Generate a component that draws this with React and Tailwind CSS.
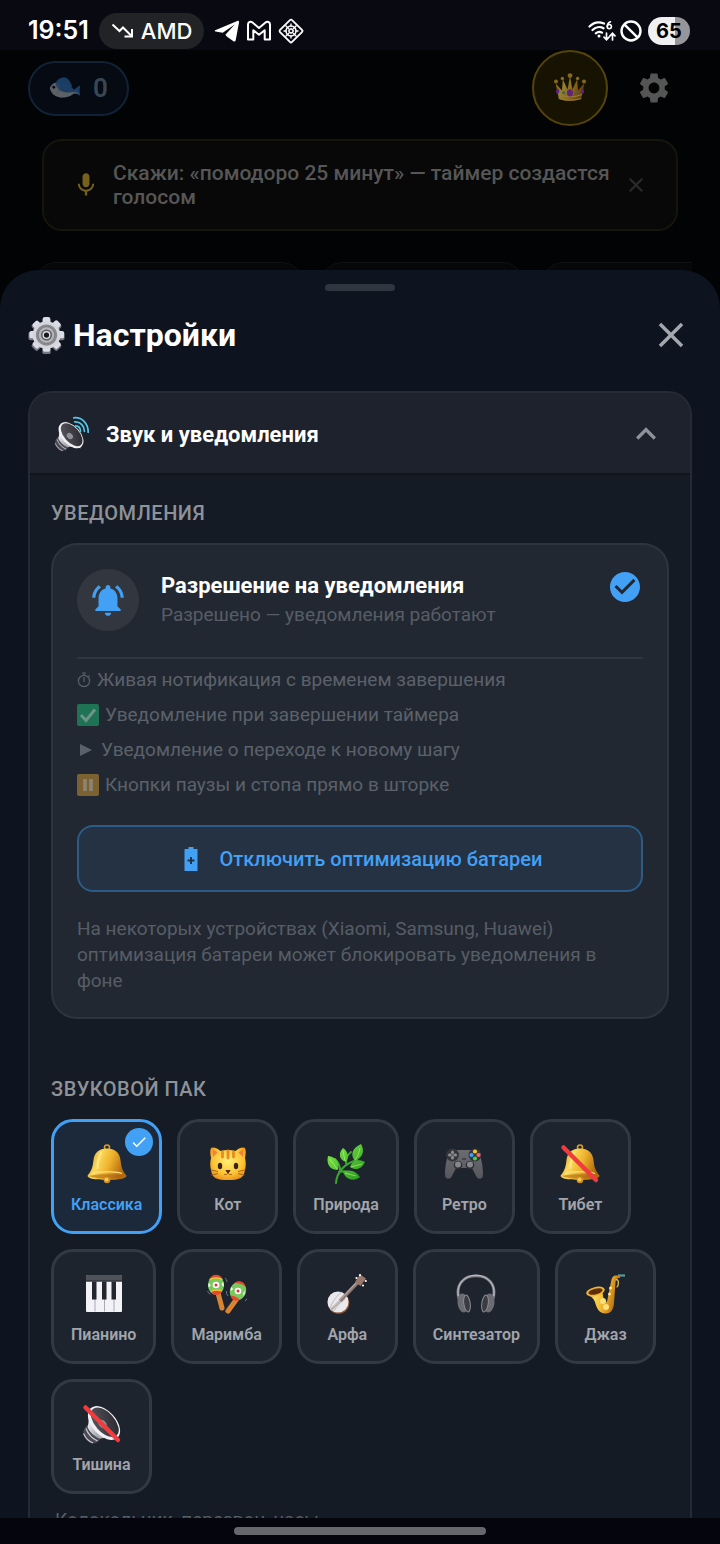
import { useState } from "react";
import {
  MdCheck,
  MdCheckCircle,
  MdClose,
  MdKeyboardArrowUp,
  MdMic,
  MdNotificationsActive,
  MdSettings,
} from "react-icons/md";

/* ---------- Status bar icons ---------- */

function TrendDownIcon() {
  return (
    <svg viewBox="0 0 24 16" className="w-6 h-4" fill="none" stroke="currentColor" strokeWidth="2">
      <path d="M1.5 1.5 8.5 8l3.5-3.5 9 9" />
      <path d="M13.5 13.5H21V6" />
    </svg>
  );
}

function TelegramIcon() {
  return (
    <svg viewBox="0 0 26 24" className="w-[26px] h-6" fill="currentColor">
      <path d="M1.2 11.2 23.3 1.9c1.1-.4 2 .3 1.7 1.6l-3.300 17.700c-.3 1.300-1.300 1.600-2.300 1L12.800 17.500l-1.400-1.800 9.300-10.100L8.700 13.700 1.500 12.500c-.9-.3-.9-.9-.3-1.300z" />
    </svg>
  );
}

function MailIcon() {
  return (
    <svg viewBox="0 0 26 22" className="w-[26px] h-[22px]" fill="none" stroke="currentColor" strokeWidth="2" strokeLinejoin="round">
      <path d="M2 4.500C2 2 4.700 1 6.500 2.500L13 8l6.500-5.500C21.300 1 24 2 24 4.500V19.500h-5.300V10.200L13 14.800l-5.700-4.600v9.300H2z" />
    </svg>
  );
}

function DiamondIcon() {
  return (
    <svg viewBox="0 0 26 26" className="w-[26px] h-[26px]" fill="none" stroke="currentColor">
      <rect x="4.500" y="4.500" width="17" height="17" rx="1.500" strokeWidth="1.800" transform="rotate(45 13 13)" />
      <circle cx="13" cy="13" r="5" strokeWidth="1.500" />
      <path d="M7.500 7.500 18.500 18.500M18.500 7.500 7.500 18.500M13 5.500v3M13 17.500v3M5.500 13h3M17.500 13h3" strokeWidth="1.300" />
      <path d="m13 10.500 2.500 2.500-2.500 2.500-2.500-2.500z" fill="#090912" strokeWidth="1.200" />
    </svg>
  );
}

function WifiIcon() {
  return (
    <svg viewBox="0 0 28 22" className="w-7 h-[22px]" fill="none" stroke="currentColor" strokeWidth="2.200" strokeLinecap="round">
      <path d="M1.500 6.500C5.500 2.500 11 1.500 16 3.500M4.500 10c3-3 7.500-3.700 11-1.700M7.800 13.300c2-1.700 4.300-1.900 6.200-.6" />
      <circle cx="11" cy="16" r="1.500" fill="currentColor" stroke="none" />
      <path d="M22.500 1.800c-2 .7-3.200 2.400-3.200 4.700" strokeWidth="1.600" />
      <circle cx="21.300" cy="6.600" r="2.100" strokeWidth="1.600" />
      <path d="M18.500 13v6.500m-2.500-2.300 2.500 2.500 2.500-2.500M24.500 20v-6.500M22 15.800l2.500-2.500 2.500 2.500" strokeWidth="1.700" />
    </svg>
  );
}

function BlockedIcon() {
  return (
    <svg viewBox="0 0 22 22" className="w-[22px] h-[22px]" fill="none" stroke="currentColor" strokeWidth="2.400">
      <circle cx="11" cy="11" r="9.500" />
      <path d="m4.300 4.300 13.400 13.400" />
    </svg>
  );
}

function BatteryPlusIcon() {
  return (
    <svg viewBox="0 0 26 26" className="w-[26px] h-[26px]" fill="currentColor">
      <path fillRule="evenodd" d="M10.500 1h5v2H19q.5 0 .5.500v21q0 .5-.5.500H7q-.5 0-.5-.500v-21q0-.5.5-.500h3.500zM12 11v2.500H9.500v2H12V18h2v-2.500h2.500v-2H14V11z" />
    </svg>
  );
}

/* ---------- Colour pictograms, all on a 40x40 grid ---------- */

function Gradients() {
  return (
    <svg className="absolute w-0 h-0" aria-hidden="true">
      <defs>
        <linearGradient id="gold" x1="0" x2="1" y1="0" y2="0.3">
          <stop offset="0" stopColor="#c98516" />
          <stop offset="0.35" stopColor="#fbd95a" />
          <stop offset="0.65" stopColor="#eeb12c" />
          <stop offset="1" stopColor="#b46b10" />
        </linearGradient>
        <linearGradient id="leaf" x1="0" x2="1" y1="0" y2="1">
          <stop offset="0" stopColor="#8af04c" />
          <stop offset="1" stopColor="#22941d" />
        </linearGradient>
        <radialGradient id="cat" cx="0.5" cy="0.4" r="0.65">
          <stop offset="0" stopColor="#fff07a" />
          <stop offset="0.65" stopColor="#fcc432" />
          <stop offset="1" stopColor="#e88d1c" />
        </radialGradient>
        <linearGradient id="steel" x1="0" x2="1" y1="0.3" y2="0.8">
          <stop offset="0" stopColor="#f4f4f8" />
          <stop offset="0.5" stopColor="#a5a5ae" />
          <stop offset="1" stopColor="#dcdce2" />
        </linearGradient>
        <linearGradient id="pad" x1="0" x2="0" y1="0" y2="1">
          <stop offset="0" stopColor="#6b6c72" />
          <stop offset="1" stopColor="#57565d" />
        </linearGradient>
        <linearGradient id="cone" x1="0" x2="1" y1="1" y2="0">
          <stop offset="0" stopColor="#5a5a60" />
          <stop offset="1" stopColor="#25252b" />
        </linearGradient>
      </defs>
    </svg>
  );
}

function BellShape() {
  return (
    <g>
      <circle cx="20" cy="3.500" r="2.500" fill="none" stroke="#d99a22" strokeWidth="1.600" />
      <path d="M20 4.500c8 0 12.500 4 13.500 11.500.7 6 1.500 10.500 5.500 15 1.500 2-1 3-4 3.700-7 1.600-23 1.600-30 0-3-.7-5.500-1.700-4-3.700 4-4.500 4.800-9 5.500-15C7.500 8.500 12 4.500 20 4.500z" fill="url(#gold)" />
      <path d="M2 32c8-2.500 28-2.500 36 0-7 3.500-29 3.500-36 0z" fill="#a65f12" opacity="0.55" />
      <path d="M5 29.500c8-2.600 22-2.600 30 0" fill="none" stroke="#fbe07a" strokeWidth="1.200" />
      <path d="M14 9c-2.500 4-3 9-3.500 15" fill="none" stroke="#fff1a8" strokeWidth="2.200" opacity="0.6" strokeLinecap="round" />
      <circle cx="20" cy="36" r="3.300" fill="#d08d21" />
      <circle cx="19.500" cy="35.500" r="2" fill="#f6c94e" />
    </g>
  );
}

function Slash() {
  return <path d="M3.500 3.500 36 36" stroke="#f03b3f" strokeWidth="4.500" strokeLinecap="round" />;
}

function SpeakerShape() {
  return (
    <g>
      <path d="M1.500 27c1-3.500 3-5.500 5.500-6.500L19.500 33c-1.500 3.500-4.500 6-8 6.500C5.500 39 1 32.500 1.500 27z" fill="#4c4a54" />
      <path d="M1.500 29.500c2 4.500 5 8 9.500 9.500M4 24.500c2 5.500 6 10 11.500 12.500" stroke="#c9c8d2" strokeWidth="1.200" fill="none" />
      <path d="M6 8c1 6 1 11-.5 15 2 5 7 9.500 12 11.500 6-1.500 12 0 17.500 1.500z" fill="url(#steel)" />
      <ellipse cx="22" cy="19" rx="20" ry="12" transform="rotate(48 22 19)" fill="#f0f0f5" />
      <ellipse cx="22.800" cy="18.300" rx="17.800" ry="9.800" transform="rotate(48 22.800 18.300)" fill="url(#cone)" />
      <ellipse cx="20.500" cy="20" rx="4.500" ry="3.500" transform="rotate(48 20.500 20)" fill="#908e96" />
    </g>
  );
}

const ART = {
  bell: <BellShape />,
  cat: (
    <g>
      <path d="M3 4c2.500-1.500 7 .5 9.500 3 5-1.200 10-1.200 15 0 2.500-2.500 7-4.500 9.500-3 1.500 3 .5 7 0 10 1 4 1 8 0 12-1.200 8.500-6 10-17 10S4.200 34.500 3 26c-1-4-1-8 0-12-.5-3-1.500-7 0-10z" fill="url(#cat)" />
      <path d="M4.500 6c2 0 3.500 1 5 2.500L5 13zM35.500 6c-2 0-3.500 1-5 2.500l4.500 4.500z" fill="#f0833c" />
      <path d="M14.500 8v5M20 7v7M25.500 8v5" stroke="#e98a22" strokeWidth="2.800" strokeLinecap="round" />
      <ellipse cx="12" cy="22" rx="2.200" ry="3.200" fill="#3a2411" />
      <ellipse cx="28" cy="22" rx="2.200" ry="3.200" fill="#3a2411" />
      <path d="M18 26.500h4l-2 2.700z" fill="#5a2a14" stroke="#5a2a14" strokeLinejoin="round" />
      <path d="M20 29c-1 2-3 2-4 1.200M20 29c1 2 3 2 4 1.200M3 26l7 1.500M3.500 31l6.500-1.500M37 26l-7 1.500M36.500 31 30 29.500" fill="none" stroke="#a8651c" strokeWidth="1" />
    </g>
  ),
  herb: (
    <g>
      <path d="M10 39c1-11 8-19 21-23M13 28c5-1 9-2 15 5M14 26c0-5-2-8-5-11M20 19c0-4 1-8 5-11" fill="none" stroke="#3aa82b" strokeWidth="2" strokeLinecap="round" />
      <path d="M35 0c4 7 2 13-6 17-5-6-3-13 6-17zM39 18c-3 7-9 9-15 5 2-6 8-9 15-5zM17 4c5 3 6 9 3 14-7-2-8-9-3-14zM2 12c8 1 12 6 10 14C4 26 0 20 2 12zM17 28c7-3 13-1 17 5-6 5-14 3-17-5z" fill="url(#leaf)" />
      <path d="M34 4c-1 5-2 8-5 12M36 20c-4 1-7 2-11 3M17 7l2 10M4 15l7 10M19 29l11 3" fill="none" stroke="#c6ff8c" strokeWidth="0.800" opacity="0.7" />
    </g>
  ),
  gamepad: (
    <g>
      <path d="M8 6h24c5 3 7 16 7 24 0 6-5 6-7 2l-4-8H12l-4 8c-2 4-7 4-7-2C1 22 3 9 8 6z" fill="url(#pad)" />
      <circle cx="8.500" cy="11" r="6.500" fill="#35353b" />
      <circle cx="31" cy="11" r="6.500" fill="#35353b" />
      <path d="M8.500 8v6M5.500 11h6" stroke="#8b8b92" strokeWidth="3" strokeLinecap="round" />
      <path d="m5.500 8 6 6M11.500 8l-6 6" stroke="#35353b" strokeWidth="0.800" />
      <circle cx="31" cy="7.500" r="2.100" fill="#f7c52d" />
      <circle cx="31" cy="14.500" r="2.100" fill="#4ccb55" />
      <circle cx="27.500" cy="11" r="2.100" fill="#3aa4f4" />
      <circle cx="34.500" cy="11" r="2.100" fill="#f06a6e" />
      <circle cx="14" cy="21" r="4.300" fill="#302f35" />
      <circle cx="26" cy="21" r="4.300" fill="#302f35" />
      <circle cx="14" cy="20.500" r="3" fill="#86868d" />
      <circle cx="26" cy="20.500" r="3" fill="#86868d" />
      <path d="M18 15h4" stroke="#303036" strokeWidth="1.200" />
    </g>
  ),
  mutedBell: (
    <g>
      <BellShape />
      <Slash />
    </g>
  ),
  piano: (
    <g>
      <rect x="2" y="1" width="36" height="37" rx="1" fill="#f3f2f7" />
      <rect x="2" y="1" width="36" height="6.500" rx="1" fill="#50525a" />
      <path d="M2 7h36" stroke="#25262c" strokeWidth="1.200" />
      <path d="M11 8v29.500M20.500 8v29.500M30 8v29.500" stroke="#aaa8b6" strokeWidth="1" />
      <path d="M8 7.500h4.500v18H8zM18 7.500h4.500v18H18zM27.500 7.500H32v18h-4.500z" fill="#25262d" />
    </g>
  ),
  maracas: (
    <g>
      <path d="m11 19 4 15" stroke="#d98432" strokeWidth="5" strokeLinecap="round" />
      <path d="m29 26-8 11" stroke="#d98432" strokeWidth="5" strokeLinecap="round" />
      <ellipse cx="9" cy="11" rx="8" ry="10" fill="#7bc85e" />
      <path d="M3 5C5-.5 13-.5 15 4.500c-4-1.500-8-1.500-12 .5zM4 17.500c3-1.500 8-1.500 11-.5-1.500 5-9 5.500-11 .5z" fill="#e8472c" />
      <path d="M2.500 5.500c4-2 9-2 13 0M4 17.500c3-1.500 8-1.500 11-.5" fill="none" stroke="#f7c438" strokeWidth="1.200" />
      <circle cx="9" cy="11" r="3.300" fill="#fff" />
      <circle cx="9" cy="11" r="1.500" fill="#e0353d" />
      <path d="M1.500 9q4 2 0 4.500zM16.500 8q-3.500 2 .3 5z" fill="#fff" />
      <ellipse cx="31" cy="17" rx="8" ry="9.500" transform="rotate(20 31 17)" fill="#7bc85e" />
      <path d="M27.500 9c4-3.500 10-1.500 11 4-3-3-6.500-4-11-4zM24 21.500c3.500.3 7 2 9 4.500-3 2-9.500 0-9-4.500z" fill="#e8472c" />
      <circle cx="31" cy="17" r="3.300" fill="#fff" />
      <circle cx="31" cy="17" r="1.500" fill="#e0353d" />
      <path d="M24 13q4 2-.5 4zM38 17q-3 2-1 5z" fill="#fff" />
      <path d="M.5 17q1 2.500 3 3.500M18 4q2 1.500 2 4M38 27q2.500-2 3-4M19.500 17q-.5 3 1.500 5" fill="none" stroke="#6d7480" strokeWidth="1" />
    </g>
  ),
  banjo: (
    <g>
      <circle cx="11.500" cy="29" r="10.800" fill="#8e5535" />
      <circle cx="11" cy="28" r="10.500" fill="#e9e9ed" />
      <path d="M3 34c3-7 7-13 12-16M7 37c2-4 7-9 11-12" stroke="#bcbcc4" strokeWidth="1" fill="none" />
      <path d="m13 27 20-21" stroke="#8f7a72" strokeWidth="3.500" />
      <path d="m4 36 9-9" stroke="#b9b4b4" strokeWidth="2.500" />
      <path d="m7 32 26-27" stroke="#d3c9c4" strokeWidth="0.800" />
      <path d="m28 8 5-7.500 6 4L33.500 12z" fill="#9a776b" />
      <circle cx="29.500" cy="4" r="1.100" fill="#fff" />
      <circle cx="33" cy="1.200" r="1.100" fill="#fff" />
      <circle cx="38.800" cy="7" r="1.100" fill="#fff" />
      <circle cx="36" cy="11.500" r="1.100" fill="#fff" />
    </g>
  ),
  headphones: (
    <g>
      <path d="M3 25C-1 10 8 1.800 20 1.800S41 10 37 25" fill="none" stroke="#85868d" strokeWidth="2.800" />
      <path d="M2.300 22C0 10 9 1.200 20 1.200s20 9 17.700 21" fill="none" stroke="#d6d6dc" strokeWidth="0.800" />
      <ellipse cx="7" cy="29" rx="5.500" ry="9.500" transform="rotate(-8 7 29)" fill="#6b6b74" />
      <ellipse cx="33" cy="29" rx="5.500" ry="9.500" transform="rotate(8 33 29)" fill="#6b6b74" />
      <ellipse cx="11" cy="29.500" rx="3.200" ry="8.500" transform="rotate(-8 11 29.500)" fill="#3b3b42" stroke="#8d8d95" strokeWidth="1" />
      <ellipse cx="29" cy="29.500" rx="3.200" ry="8.500" transform="rotate(8 29 29.500)" fill="#3b3b42" stroke="#8d8d95" strokeWidth="1" />
    </g>
  ),
  sax: (
    <g>
      <path d="M39 1.500h-7" stroke="#5d9a9a" strokeWidth="2.200" />
      <path d="M34 1.500h-3.500c-3.500 0-4.500 2-5.200 5l-3.800 19c-.6 3.500-3 4-3.800 0L16 16 2 20c3 3 5.500 4 7 8 1.500 6 4 11.500 10.500 11.500 6 0 8-4.500 8.500-10.500l1.500-20c.2-3 .8-5 4.500-5z" fill="url(#gold)" />
      <ellipse cx="9.500" cy="17.500" rx="9.500" ry="4.500" transform="rotate(-14 9.500 17.500)" fill="#f4b62c" />
      <ellipse cx="9.500" cy="17.500" rx="7.300" ry="2.900" transform="rotate(-14 9.500 17.500)" fill="#5e2e0c" />
      <path d="M30 6c3.500-2 2.500 7 .5 7" fill="none" stroke="#e9c45b" strokeWidth="1.300" />
      <circle cx="24.500" cy="14" r="1.500" fill="#ffe68a" />
      <circle cx="23.500" cy="20" r="1.500" fill="#ffe68a" />
      <circle cx="17" cy="27" r="3" fill="#ffe07a" />
      <circle cx="20" cy="33" r="3" fill="#ffe07a" />
    </g>
  ),
  mutedSpeaker: (
    <g>
      <SpeakerShape />
      <Slash />
    </g>
  ),
  speaker: (
    <g>
      <g transform="translate(0 5) scale(0.86)">
        <SpeakerShape />
      </g>
      <path d="M22 2c9-1 16 6 16 16M23 6.500c6.500-.5 10.500 4.500 10.800 10.500M24 11c3.300 0 5.300 2.500 5.500 6" fill="none" stroke="#53c9e8" strokeWidth="1.900" strokeLinecap="round" />
    </g>
  ),
  gear: (
    <g>
      {[0, 45, 90, 135].map((angle) => (
        <rect key={angle} x="15.500" y="1" width="9" height="39" rx="2" fill="#77777f" transform={`rotate(${angle} 20 20.500)`} />
      ))}
      {[0, 45, 90, 135].map((angle) => (
        <rect key={angle} x="16" y="0" width="8" height="37.500" rx="2" fill="#dcdce6" transform={`rotate(${angle} 20 19)`} />
      ))}
      <circle cx="20" cy="19.500" r="15" fill="#d5d5de" />
      <circle cx="20" cy="19.500" r="11.500" fill="#8b8b92" />
      <circle cx="20" cy="19.500" r="9" fill="#b3b3ba" stroke="#6f6f76" strokeWidth="0.800" />
      <circle cx="20" cy="19.500" r="6" fill="#5e5e64" />
      <circle cx="20" cy="19.500" r="4.300" fill="#dedee4" />
      <circle cx="20" cy="19.500" r="2.800" fill="#17191f" />
    </g>
  ),
  fish: (
    <g>
      <path d="M8 14c2-6 9-8 13-7 4 2 6 6 8 11l-8 4z" fill="#2f70b5" />
      <path d="M1 20C5 11 20 9 31 22c3-1 5-4 8-5-1 5-1 8 0 13-3-2-5-3-8-3C22 35 4 34 1 20z" fill="#3672b4" />
      <path d="M1 20c2-4 4-6 7-7 1 4 2 8 6 10 5 3 10 3 17 2 3 0 5 1 7 3-3-1-4-1-7-1C22 35 4 34 1 20z" fill="#b4b8b8" />
      <circle cx="6" cy="19" r="1.800" fill="#111" />
      <path d="M10 15c3 4 3 8 0 12" stroke="#8b9298" strokeWidth="1.200" fill="none" />
    </g>
  ),
  crown: (
    <g>
      <path d="m6 33-4-19 8 9 1-14 6 13 3-17 3 17 6-13 1 14 8-9-4 19c-6 4-22 4-28 0z" fill="url(#gold)" />
      <path d="M5 28c9 4 21 4 30 0M6 33c8 3 20 3 28 0" fill="none" stroke="#f6d46b" strokeWidth="1.300" />
      <circle cx="2.500" cy="12" r="2.500" fill="#e0ad3a" />
      <circle cx="10.500" cy="8" r="2.200" fill="#e0ad3a" />
      <circle cx="20" cy="4.500" r="3" fill="#e0ad3a" />
      <circle cx="29.500" cy="8" r="2.200" fill="#e0ad3a" />
      <circle cx="37.500" cy="12" r="2.500" fill="#e0ad3a" />
      <ellipse cx="20" cy="26" rx="3.800" ry="4.500" fill="#9a35e0" />
      <ellipse cx="4.500" cy="24" rx="2" ry="3.500" fill="#9a35e0" />
      <ellipse cx="35.500" cy="24" rx="2" ry="3.500" fill="#9a35e0" />
      <circle cx="12" cy="26" r="1.800" fill="#4fa3a0" />
      <circle cx="28" cy="26" r="1.800" fill="#4fa3a0" />
    </g>
  ),
};

function Pictogram({ name, className }) {
  return (
    <svg viewBox="0 0 40 40" className={className} aria-hidden="true">
      {ART[name]}
    </svg>
  );
}

/* ---------- Data ---------- */

const SOUND_PACKS = [
  { id: "classic", label: "Классика", art: "bell" },
  { id: "cat", label: "Кот", art: "cat" },
  { id: "nature", label: "Природа", art: "herb" },
  { id: "retro", label: "Ретро", art: "gamepad" },
  { id: "tibet", label: "Тибет", art: "mutedBell" },
  { id: "piano", label: "Пианино", art: "piano" },
  { id: "marimba", label: "Маримба", art: "maracas" },
  { id: "harp", label: "Арфа", art: "banjo" },
  { id: "synth", label: "Синтезатор", art: "headphones" },
  { id: "jazz", label: "Джаз", art: "sax" },
  { id: "silence", label: "Тишина", art: "mutedSpeaker" },
];

const stopwatch = (
  <svg viewBox="0 0 14 18" className="w-3.5 h-[18px]" fill="none" stroke="currentColor" strokeWidth="1.200">
    <circle cx="7" cy="10" r="5.600" />
    <path d="M7 6v5M5 2h4M7 2v3M11.500 4.500l1 1" />
  </svg>
);

const checkBox = (
  <svg viewBox="0 0 22 22" className="w-[22px] h-[22px]">
    <rect width="22" height="22" rx="2" fill="#1f7355" />
    <path d="m4 11 5 5.500 9-11" fill="none" stroke="#6f9289" strokeWidth="3" />
  </svg>
);

const playMark = (
  <svg viewBox="0 0 18 18" className="w-[18px] h-[18px]" fill="currentColor">
    <path d="m3 3 12 6-12 6z" />
  </svg>
);

const pauseBox = (
  <svg viewBox="0 0 22 22" className="w-[22px] h-[22px]">
    <rect width="22" height="22" rx="2" fill="#7c6133" />
    <path d="M8 5v12M14 5v12" stroke="#8c8575" strokeWidth="3.500" />
  </svg>
);

const FEATURES = [
  { icon: stopwatch, text: "Живая нотификация с временем завершения" },
  { icon: checkBox, text: "Уведомление при завершении таймера" },
  { icon: playMark, text: "Уведомление о переходе к новому шагу" },
  { icon: pauseBox, text: "Кнопки паузы и стопа прямо в шторке" },
];

/* ---------- Sections ---------- */

function StatusBar() {
  return (
    <div className="flex items-center justify-between h-[50px] pt-3 pl-7 pr-[30px] bg-[#090912] text-white shrink-0">
      <div className="flex items-center">
        <span className="font-['Inter'] text-[25px] font-semibold">19:51</span>
        <span className="flex items-center gap-1.5 h-9 ml-2.5 px-3 rounded-full bg-[#222326] font-['Inter'] text-[22px] font-medium">
          <TrendDownIcon />
          AMD
        </span>
        <span className="flex items-center gap-1.5 ml-2.5">
          <TelegramIcon />
          <MailIcon />
          <DiamondIcon />
        </span>
      </div>
      <div className="flex items-center gap-1">
        <WifiIcon />
        <BlockedIcon />
        <span className="flex items-center justify-center w-[42px] h-7 ml-0.5 rounded-full bg-linear-to-r from-[#f0f0f2] from-64% to-[#96969a] to-64% text-black font-['Inter'] text-xl font-bold">
          65
        </span>
      </div>
    </div>
  );
}

function TimerScreen() {
  return (
    <div className="shrink-0">
      <div className="flex items-center h-[76px] pl-7 pr-[48px]">
        <button className="flex items-center gap-3 h-[55px] px-[19px] rounded-full border-2 border-[#112236] bg-[#050a13] text-[26px] font-semibold text-[#394753]">
          <Pictogram name="fish" className="w-8 h-8 opacity-50" />
          0
        </button>
        <button aria-label="Премиум" className="flex items-center justify-center w-[76px] h-[76px] ml-auto rounded-full border-2 border-[#564308] bg-[#171303]">
          <Pictogram name="crown" className="w-8 h-8 opacity-55" />
        </button>
        <button aria-label="Настройки" className="ml-7 text-[#555556]">
          <MdSettings className="w-9 h-9" />
        </button>
      </div>

      <div className="flex items-center mt-[13px] mx-[42px] py-5 px-7 rounded-[20px] border-2 border-[#15150b] bg-[#080808]">
        <MdMic className="w-7 h-7 shrink-0 text-[#74611c]" />
        <p className="flex-1 ml-[13px] text-[21px] leading-6 font-medium text-[#565656]">
          Скажи: «помодоро 25 минут» — таймер создастся голосом
        </p>
        <button aria-label="Скрыть подсказку" className="text-[#2b2b2b]">
          <MdClose className="w-6 h-6" />
        </button>
      </div>

      <div className="flex gap-5 h-12 mt-[31px] mx-7 pl-2 overflow-hidden">
        <div className="w-[266px] shrink-0 rounded-t-[20px] border border-[#111214] bg-[#060708]" />
        <div className="w-[201px] shrink-0 rounded-t-[20px] border border-[#111214] bg-[#060708]" />
        <div className="w-[201px] shrink-0 rounded-t-[20px] border border-[#111214] bg-[#060708]" />
      </div>
    </div>
  );
}

function NotificationCard() {
  return (
    <div className="p-6 pb-[23px] rounded-[26px] border-2 border-[#2e343d] bg-[#222831]">
      <div className="flex h-[62px]">
        <div className="flex items-center justify-center w-[62px] h-[62px] rounded-full bg-[#31363f] text-[#42a0f5]">
          <MdNotificationsActive className="w-[38px] h-[38px]" />
        </div>
        <div className="flex-1 ml-[22px]">
          <h4 className="text-[22px] leading-[34px] font-bold text-white">Разрешение на уведомления</h4>
          <p className="text-[19px] leading-6 text-[#575d66]">Разрешено — уведомления работают</p>
        </div>
        <MdCheckCircle className="w-9 h-9 text-[#42a0f5]" />
      </div>

      <ul className="mt-[26px] pt-[3px] border-t-2 border-[#30363f] text-[19px] leading-[35px] text-[#5b616a]">
        {FEATURES.map((feature) => (
          <li key={feature.text} className="flex items-center gap-1.5">
            {feature.icon}
            {feature.text}
          </li>
        ))}
      </ul>

      <button className="flex items-center justify-center gap-4 w-full h-[67px] mt-[23px] rounded-2xl border-2 border-[#2b5b86] bg-[#243243] text-xl font-medium text-[#42a0f5]">
        <BatteryPlusIcon />
        Отключить оптимизацию батареи
      </button>

      <p className="mt-6 text-[19px] leading-[26px] text-[#575d66]">
        На некоторых устройствах (Xiaomi, Samsung, Huawei) оптимизация батареи может блокировать уведомления в фоне
      </p>
    </div>
  );
}

function SoundPackTile({ pack, selected, onSelect }) {
  return (
    <button
      onClick={onSelect}
      aria-pressed={selected}
      className={`relative flex flex-col items-center gap-[11px] min-w-[101px] h-[115px] px-[17px] pt-[22px] rounded-[22px] border-3 text-base leading-5 font-semibold ${
        selected ? "border-[#42a0f5] bg-[#1b293a] text-[#42a0f5]" : "border-[#333942] bg-[#1e242e] text-[#a1a5ac]"
      }`}
    >
      <Pictogram name={pack.art} className="w-10 h-10" />
      {pack.label}
      {selected && (
        <span className="absolute top-1.5 right-1.5 flex items-center justify-center w-7 h-7 rounded-full bg-[#42a0f5] text-white">
          <MdCheck className="w-[18px] h-[18px]" />
        </span>
      )}
    </button>
  );
}

function SettingsSheet() {
  const [activePack, setActivePack] = useState("classic");

  return (
    <div className="relative flex flex-col flex-1 min-h-0 -mt-10 px-7 pt-3.5 rounded-t-[38px] bg-[#0d141f]">
      <div className="w-[70px] h-[7px] mx-auto rounded-full bg-[#303640] shrink-0" />

      <div className="flex items-center justify-between h-10 mt-6 shrink-0">
        <h2 className="flex items-center gap-2 text-[32px] font-bold text-white">
          <Pictogram name="gear" className="w-[37px] h-[37px]" />
          Настройки
        </h2>
        <button aria-label="Закрыть" className="text-[#a4a7ad]">
          <MdClose className="w-[42px] h-[42px]" />
        </button>
      </div>

      <div className="flex-1 min-h-0 mt-9 overflow-y-auto [scrollbar-width:none]">
        <section className="rounded-t-3xl border-2 border-b-0 border-[#252b35] bg-[#151b25] overflow-hidden">
          <button className="flex items-center w-full h-[82px] pt-0.5 px-6 border-b-2 border-[#10151e] bg-[#1d222c] text-left">
            <Pictogram name="speaker" className="w-9 h-9" />
            <span className="flex-1 ml-4 text-[22px] font-bold text-white">Звук и уведомления</span>
            <MdKeyboardArrowUp className="w-10 h-10 text-[#8d9198]" />
          </button>

          <div className="px-[21px] pt-[26px] pb-8">
            <h3 className="text-xl leading-6 font-medium tracking-wide text-[#8e9299]">УВЕДОМЛЕНИЯ</h3>
            <div className="mt-[18px]">
              <NotificationCard />
            </div>

            <h3 className="mt-[58px] text-xl leading-6 font-medium tracking-wide text-[#8e9299]">ЗВУКОВОЙ ПАК</h3>
            <div className="flex flex-wrap gap-[15px] mt-[18px]">
              {SOUND_PACKS.map((pack) => (
                <SoundPackTile
                  key={pack.id}
                  pack={pack}
                  selected={pack.id === activePack}
                  onSelect={() => setActivePack(pack.id)}
                />
              ))}
            </div>
            <p className="mt-3.5 ml-1 text-[19px] leading-6 text-[#575d66]">Колокольчик, перезвон, часы</p>
          </div>
        </section>
      </div>
    </div>
  );
}

export default function App() {
  return (
    <div className="flex flex-col h-screen overflow-hidden bg-[#020304] font-['Roboto',sans-serif]">
      <Gradients />
      <StatusBar />
      <TimerScreen />
      <SettingsSheet />
      <div className="flex items-center justify-center h-[26px] shrink-0 bg-[#05060d]">
        <div className="w-[35%] h-2 rounded-full bg-[#66676c]" />
      </div>
    </div>
  );
}
